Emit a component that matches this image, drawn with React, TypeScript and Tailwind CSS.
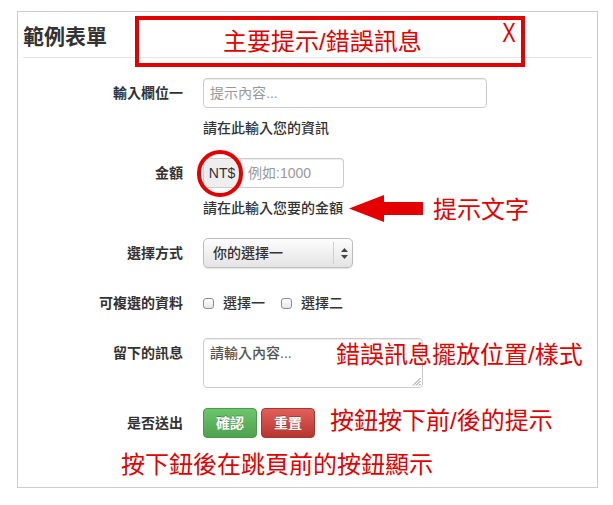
import React from "react";

const FONT = { fontFamily: '"Liberation Sans", "Noto Sans CJK TC", sans-serif' };
const RED = "text-[#e50000]";

function Label({ children }: { children: React.ReactNode }) {
  return (
    <div className="w-[160px] shrink-0 text-right pt-[5px] leading-[20px] text-[14px] font-bold text-[#333]">
      {children}
    </div>
  );
}

function Checkbox() {
  return (
    <div className="w-[11px] h-[11px] rounded-[3px] border border-[#8e8e8e] bg-linear-to-b from-white to-[#e6e6e6] shrink-0" />
  );
}

export default function App() {
  return (
    <div className="w-[613px] h-[505px] bg-white pt-[11px] pl-[17px]" style={FONT}>
      <div className="relative w-[581px] h-[477px] border border-[#cccccc] px-[5px] pt-[5px]">
        {/* legend */}
        <div className="h-[41px] border-b border-[#e5e5e5] text-[21px] leading-[40px] font-bold text-[#333]">
          範例表單
        </div>

        {/* overlay red box */}
        <div className="absolute left-[117px] top-[4px] w-[390px] h-[51px] border-[4px] border-[#e50000]">
          <div className={`absolute left-[84px] top-[7px] text-[24px] leading-[30px] whitespace-nowrap ${RED}`}>
            主要提示/錯誤訊息
          </div>
          <div
            className={`absolute right-[3px] top-[-2px] text-[27px] leading-[30px] scale-x-75 ${RED}`}
            style={{ fontFamily: '"Liberation Sans", sans-serif' }}
          >
            X
          </div>
        </div>

        <div className="mt-[20px] flex flex-col">
          {/* row 1 */}
          <div className="flex items-start">
            <Label>輸入欄位一</Label>
            <div className="ml-[20px]">
              <div className="w-[284px] h-[30px] border border-[#cccccc] rounded-[4px] shadow-[inset_0_1px_1px_rgba(0,0,0,0.075)] px-[6px] leading-[28px] text-[14px] text-[#999]">
                提示內容...
              </div>
              <div className="mt-[10px] leading-[20px] text-[14px] text-[#333] font-medium">請在此輸入您的資訊</div>
            </div>
          </div>

          {/* row 2 */}
          <div className="flex items-start mt-[20px]">
            <Label>金額</Label>
            <div className="ml-[20px]">
              <div className="relative flex h-[30px]">
                <div className="w-[38px] h-[30px] border border-[#cccccc] rounded-l-[4px] bg-[#eeeeee] text-[14px] leading-[28px] text-center text-[#333]">
                  NT$
                </div>
                <div className="w-[103px] h-[30px] border border-l-0 border-[#cccccc] rounded-r-[4px] shadow-[inset_0_1px_1px_rgba(0,0,0,0.075)] px-[7px] leading-[28px] text-[14px] text-[#999]">
                  例如:1000
                </div>
                <div className="absolute left-[-6px] top-[-8px] w-[46px] h-[47px] rounded-full border-[4px] border-[#e50000]" />
              </div>
              <div className="mt-[10px] h-[20px] flex items-center">
                <span className="leading-[20px] text-[14px] text-[#333] font-medium whitespace-nowrap">請在此輸入您要的金額</span>
                <svg className="ml-[6px] shrink-0" width="75" height="27" viewBox="0 0 75 27">
                  <polygon points="0,13.5 35,0 35,7 74,7 74,20 35,20 35,27" fill="#e50000" />
                </svg>
                <span className={`ml-[9px] text-[24px] leading-[20px] whitespace-nowrap relative top-[2px] ${RED}`}>提示文字</span>
              </div>
            </div>
          </div>

          {/* row 3 */}
          <div className="flex items-start mt-[20px]">
            <Label>選擇方式</Label>
            <div className="ml-[20px]">
              <div className="relative w-[150px] h-[30px] rounded-[5px] border border-[#bdbdbd] bg-linear-to-b from-[#fdfdfd] to-[#e4e4e4] shadow-[0_1px_1px_rgba(0,0,0,0.12)] flex items-center">
                <span className="pl-[9px] text-[14px] leading-[20px] text-[#333] font-medium">你的選擇一</span>
                <div className="absolute left-[129px] top-[3px] bottom-[3px] w-px bg-[#cfcfcf]" />
                <svg className="absolute left-[137px] top-[9px]" width="7" height="11" viewBox="0 0 7 11">
                  <polygon points="3.5,0 7,4 0,4" fill="#444" />
                  <polygon points="0,7 7,7 3.5,11" fill="#444" />
                </svg>
              </div>
            </div>
          </div>

          {/* row 4 */}
          <div className="flex items-start mt-[20px]">
            <Label>可複選的資料</Label>
            <div className="ml-[20px] h-[30px] flex items-center text-[14px] text-[#333] font-medium">
              <Checkbox />
              <span className="ml-[9px] leading-[20px]">選擇一</span>
              <div className="ml-[16px]">
                <Checkbox />
              </div>
              <span className="ml-[9px] leading-[20px]">選擇二</span>
            </div>
          </div>

          {/* row 5 */}
          <div className="flex items-start mt-[20px]">
            <Label>留下的訊息</Label>
            <div className="ml-[20px] relative">
              <div className="relative w-[220px] h-[50px] border border-[#cccccc] rounded-[4px] shadow-[inset_0_1px_1px_rgba(0,0,0,0.075)] pl-[6px] pt-[4px] leading-[20px] text-[14px] text-[#555] font-medium">
                請輸入內容...
                <svg className="absolute right-[1px] bottom-[1px]" width="9" height="9" viewBox="0 0 9 9">
                  <line x1="8.5" y1="1" x2="1" y2="8.5" stroke="#888" strokeWidth="1" />
                  <line x1="8.5" y1="4" x2="4" y2="8.5" stroke="#888" strokeWidth="1" />
                  <line x1="8.5" y1="7" x2="7" y2="8.5" stroke="#888" strokeWidth="1" />
                </svg>
              </div>
              <div className={`absolute left-[133px] top-[1px] text-[24px] leading-[32px] whitespace-nowrap ${RED}`}>
                錯誤訊息擺放位置/樣式
              </div>
            </div>
          </div>

          {/* row 6 */}
          <div className="flex items-start mt-[20px]">
            <Label>是否送出</Label>
            <div className="ml-[20px] flex items-center">
              <div className="w-[54px] h-[30px] rounded-[4px] border border-[#4a9a4a] bg-linear-to-b from-[#6cc66c] to-[#4ea24e] text-white font-bold text-[14px] leading-[28px] text-center [text-shadow:0_-1px_0_rgba(0,0,0,0.25)]">
                確認
              </div>
              <div className="ml-[4px] w-[54px] h-[30px] rounded-[4px] border border-[#a83530] bg-linear-to-b from-[#e2605b] to-[#b7352f] text-white font-bold text-[14px] leading-[28px] text-center [text-shadow:0_-1px_0_rgba(0,0,0,0.25)]">
                重置
              </div>
              <span className={`ml-[15px] text-[24px] leading-[30px] whitespace-nowrap relative top-[-2px] ${RED}`}>按鈕按下前/後的提示</span>
            </div>
          </div>

          <div className={`mt-[11px] pl-[98px] text-[24px] leading-[32px] whitespace-nowrap ${RED}`}>
            按下鈕後在跳頁前的按鈕顯示
          </div>
        </div>
      </div>
    </div>
  );
}
